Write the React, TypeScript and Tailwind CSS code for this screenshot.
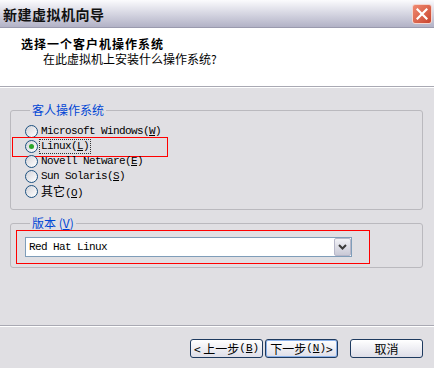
import React from "react";

const cjk = { fontFamily: '"Noto Sans CJK SC", "Liberation Sans", sans-serif' };
const mono = { fontFamily: '"Liberation Mono", "Noto Sans CJK SC", monospace' };

function Radio({ checked }: { checked?: boolean }) {
  return (
    <span className="flex h-[13px] w-[13px] shrink-0 items-center justify-center rounded-full border border-[#1c5180] bg-linear-to-br from-[#d4d4da] to-white">
      {checked && <span className="h-[5px] w-[5px] rounded-full bg-[#2aa52a]" />}
    </span>
  );
}

function Key({ k }: { k: string }) {
  return (
    <>
      (<span className="underline underline-offset-1">{k}</span>)
    </>
  );
}

function Button({ children, isDefault }: { children: React.ReactNode; isDefault?: boolean }) {
  return (
    <button
      className={
        "flex h-[19px] w-[73px] items-center justify-center rounded-[3px] border border-[#1e3a5f] bg-linear-to-b from-white to-[#dedee8] text-[12px] leading-none text-black " +
        (isDefault ? "shadow-[inset_0_0_0_1px_#8ab0e8]" : "")
      }
      style={cjk}
    >
      {children}
    </button>
  );
}

export default function App() {
  const options = [
    { label: "Microsoft Windows", key: "W" },
    { label: "Linux", key: "L", checked: true },
    { label: "Novell Netware", key: "E" },
    { label: "Sun Solaris", key: "S" },
    { label: "其它", key: "O", cjk: true },
  ];

  return (
    <div className="flex h-[368px] w-[434px] flex-col overflow-hidden bg-[#e0dfe3]">
      {/* title bar */}
      <div className="flex h-[28px] items-center justify-between border-b border-[#9a9aae] bg-linear-to-b from-[#fbfbfd] via-[#d6d6e2] to-[#b2b2c6] pl-[3px] pr-[2px]">
        <span className="text-[14px] font-bold leading-none tracking-[0.5px] text-[#111]" style={cjk}>
          新建虚拟机向导
        </span>
        <span className="flex h-[20px] w-[20px] items-center justify-center rounded-[3px] border border-[#f4d6d0] bg-linear-to-br from-[#f08a72] to-[#c8432c]">
          <svg width="12" height="12" viewBox="0 0 12 12">
            <path d="M1.5 1.5 L10.5 10.5 M10.5 1.5 L1.5 10.5" stroke="white" strokeWidth="2.2" strokeLinecap="square" />
          </svg>
        </span>
      </div>

      {/* header */}
      <div className="h-[59px] border-b border-[#a9a9b3] bg-white pl-[21px] pt-[9px]" style={cjk}>
        <div className="text-[12px] font-bold leading-[14px] tracking-[1px] text-black">选择一个客户机操作系统</div>
        <div className="pl-[22px] pt-[1px] text-[12px] leading-[14px] text-black">在此虚拟机上安装什么操作系统?</div>
      </div>

      {/* body */}
      <div className="flex-1 border-t border-white">
        <fieldset className="mx-[10px] mt-[15px] w-[413px] rounded-[3px] border border-[#bab9be] pb-[10px] pl-[14px] pt-[7px]">
          <legend className="ml-[5px] px-[2px] text-[12px] leading-[14px] text-[#0046d5]" style={cjk}>
            客人操作系统
          </legend>
          {options.map((o) => (
            <div key={o.key} className="relative flex h-[15px] items-center">
              <Radio checked={o.checked} />
              <span
                className={
                  "ml-[2px] px-[1px] text-[11px] leading-[13px] tracking-[-0.6px] text-black " +
                  (o.checked ? "outline outline-1 outline-dotted outline-[#333]" : "")
                }
                style={mono}
              >
                {o.cjk ? <span className="text-[12px] tracking-normal" style={cjk}>{o.label}</span> : o.label}
                <Key k={o.key} />
              </span>
              {o.checked && (
                <span className="absolute left-[-13px] top-[-2px] h-[20px] w-[156px] border border-[#ff0000]" />
              )}
            </div>
          ))}
        </fieldset>

        <fieldset className="mx-[10px] mt-[6px] w-[413px] rounded-[3px] border border-[#bab9be] pb-[10px] pl-[14px] pt-[7px]">
          <legend className="ml-[5px] px-[2px] text-[12px] leading-[14px] text-[#0046d5]" style={cjk}>
            版本 <Key k="V" />
          </legend>
          <div className="relative flex h-[20px] w-[327px] items-center border border-[#7f9db9] bg-white">
            <span className="flex-1 pl-[3px] text-[11px] tracking-[-0.6px] text-black" style={mono}>
              Red Hat Linux
            </span>
            <span className="flex h-[18px] w-[17px] items-center justify-center rounded-[2px] border border-[#b7b7c9] bg-linear-to-b from-[#f2f2f6] to-[#c9c9d6]">
              <svg width="9" height="6" viewBox="0 0 9 6">
                <path d="M1 1 L4.5 4.5 L8 1" stroke="#3a3a3a" strokeWidth="2" fill="none" />
              </svg>
            </span>
            <span className="absolute left-[-10px] top-[-8px] h-[34px] w-[354px] border border-[#ff0000]" />
          </div>
        </fieldset>
      </div>

      {/* footer */}
      <div className="h-[43px] border-t border-[#a9a9b3]">
        <div className="flex h-full border-t border-white pr-[11px] pt-[12px]">
          <div className="ml-auto flex gap-[2px]">
            <Button>
              &lt; 上一步<span style={mono} className="text-[11px]"><Key k="B" /></span>
            </Button>
            <Button isDefault>
              下一步<span style={mono} className="text-[11px]"><Key k="N" /></span> &gt;
            </Button>
          </div>
          <div className="ml-[12px]">
            <Button>取消</Button>
          </div>
        </div>
      </div>
    </div>
  );
}
